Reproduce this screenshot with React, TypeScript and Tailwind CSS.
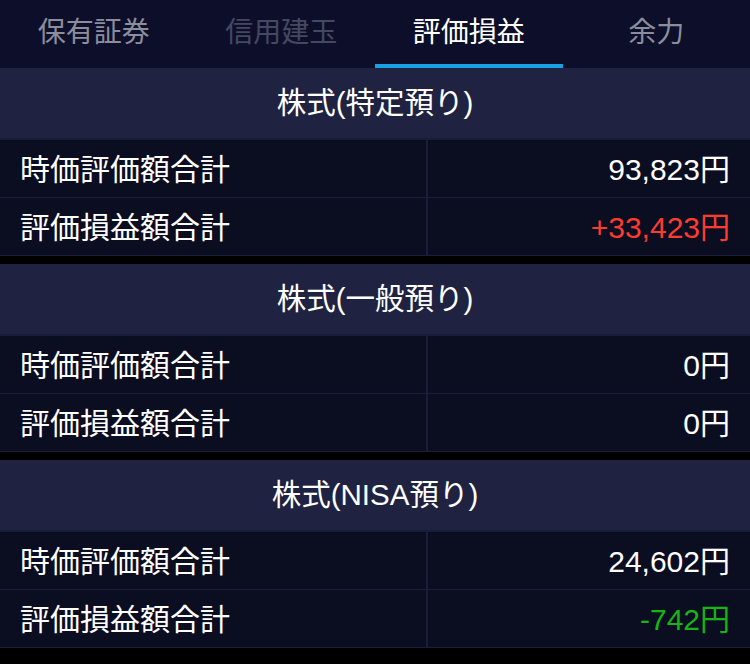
import React from "react";

type Row = { label: string; value: string; tone?: "plus" | "minus" };

type Section = { title: string; rows: Row[] };

const TABS = [
  { label: "保有証券", state: "idle" },
  { label: "信用建玉", state: "disabled" },
  { label: "評価損益", state: "active" },
  { label: "余力", state: "idle" },
];

const SECTIONS: Section[] = [
  {
    title: "株式(特定預り)",
    rows: [
      { label: "時価評価額合計", value: "93,823円" },
      { label: "評価損益額合計", value: "+33,423円", tone: "plus" },
    ],
  },
  {
    title: "株式(一般預り)",
    rows: [
      { label: "時価評価額合計", value: "0円" },
      { label: "評価損益額合計", value: "0円" },
    ],
  },
  {
    title: "株式(NISA預り)",
    rows: [
      { label: "時価評価額合計", value: "24,602円" },
      { label: "評価損益額合計", value: "-742円", tone: "minus" },
    ],
  },
];

const FONT = "font-['Liberation_Sans','Noto_Sans_CJK_JP',sans-serif]";

export default function App() {
  return (
    <div className={`w-[750px] h-[664px] bg-black overflow-hidden ${FONT}`}>
      {/* Tabs */}
      <div className="flex h-[68px] bg-[#0d0f2a]">
        {TABS.map((tab) => (
          <div
            key={tab.label}
            className={`flex-1 flex items-center justify-center border-b-4 pt-[2px] text-[28px] leading-none ${
              tab.state === "active"
                ? "border-[#1aa0e4] text-white"
                : tab.state === "disabled"
                ? "border-transparent text-[#45485f]"
                : "border-transparent text-[#8c8d9c]"
            }`}
          >
            {tab.label}
          </div>
        ))}
      </div>

      {/* Sections */}
      <div className="flex flex-col gap-2">
        {SECTIONS.map((section) => (
          <div key={section.title} className="flex flex-col">
            <div className="h-[72px] flex items-center justify-center bg-[#1f2240] border-b-2 border-[#191c36] text-white text-[29.5px] leading-none">
              {section.title}
            </div>
            {section.rows.map((row) => (
              <div
                key={row.label}
                className="grid grid-cols-[428px_1fr] h-[58px] bg-[#0b0d21] border-b border-[#1c1f3b]"
              >
                <div className="flex items-center pl-[20px] pt-[2px] border-r-2 border-[#1a1d38] text-white text-[30px] leading-none">
                  {row.label}
                </div>
                <div
                  className={`flex items-center justify-end pr-[20px] pt-[2px] text-[30px] leading-none ${
                    row.tone === "plus"
                      ? "text-[#ff3b30]"
                      : row.tone === "minus"
                      ? "text-[#16b416]"
                      : "text-white"
                  }`}
                >
                  {row.value}
                </div>
              </div>
            ))}
          </div>
        ))}
      </div>
    </div>
  );
}
